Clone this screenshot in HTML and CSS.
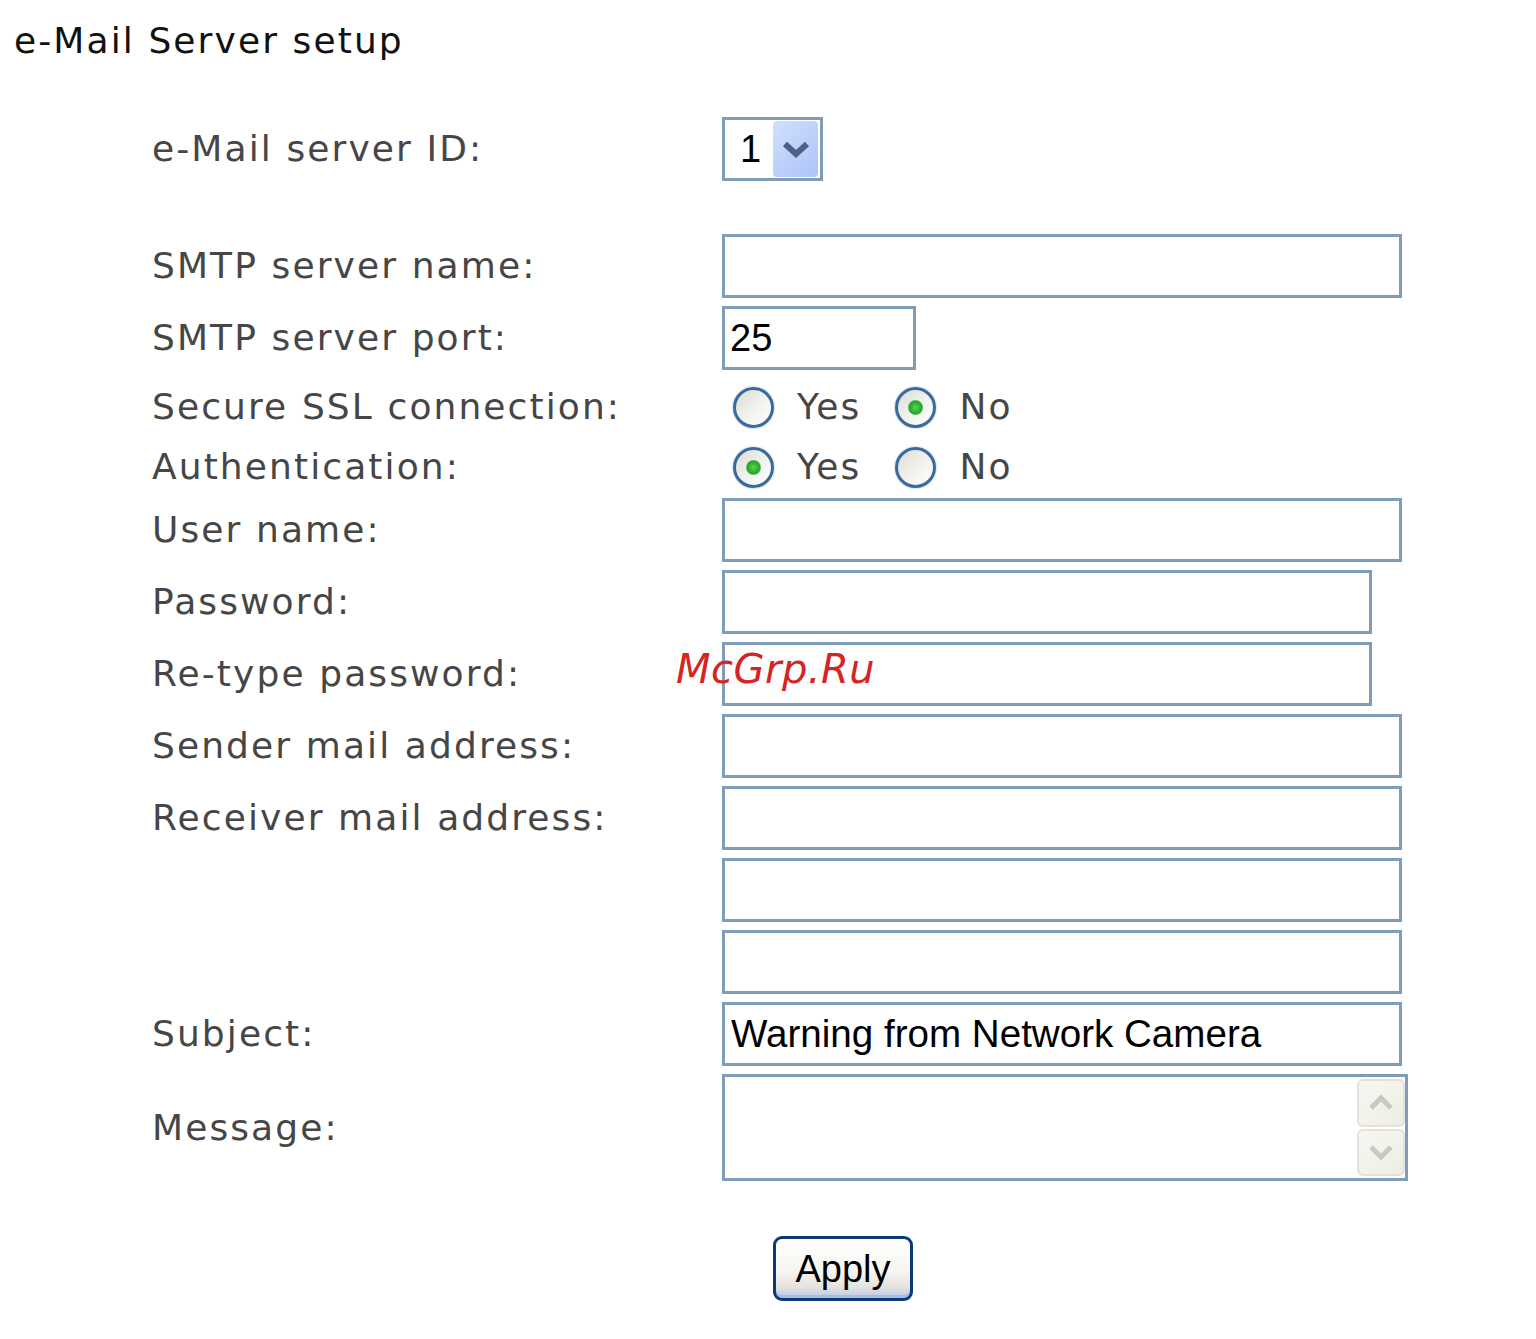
FILE: index.html
```html
<!DOCTYPE html>
<html lang="en">
<head>
<meta charset="utf-8">
<title>e-Mail Server setup</title>
<link rel="stylesheet" href="styles.css">
</head>
<body>
<h1 class="title">e-Mail Server setup</h1>
<form class="form">
  <div class="row row-id">
    <label class="lbl">e-Mail server ID:</label>
    <div class="select">
      <span class="select-val">1</span>
      <span class="select-btn">
        <svg width="30" height="20" viewBox="0 0 30 20"><polyline points="4,5 15,15 26,5" fill="none" stroke="#4d6185" stroke-width="6" stroke-linejoin="miter"/></svg>
      </span>
    </div>
  </div>
  <div class="row row-name">
    <label class="lbl">SMTP server name:</label>
    <input class="field wide" type="text">
  </div>
  <div class="row">
    <label class="lbl">SMTP server port:</label>
    <input class="field port" type="text" value="25">
  </div>
  <div class="row row-radio row-ssl">
    <label class="lbl">Secure SSL connection:</label>
    <div class="radios">
      <input class="radio" type="radio" name="ssl"><span class="rtext">Yes</span>
      <input class="radio" type="radio" name="ssl" checked><span class="rtext">No</span>
    </div>
  </div>
  <div class="row row-radio row-auth">
    <label class="lbl">Authentication:</label>
    <div class="radios">
      <input class="radio" type="radio" name="auth" checked><span class="rtext">Yes</span>
      <input class="radio" type="radio" name="auth"><span class="rtext">No</span>
    </div>
  </div>
  <div class="row row-user">
    <label class="lbl">User name:</label>
    <input class="field wide" type="text">
  </div>
  <div class="row">
    <label class="lbl">Password:</label>
    <input class="field pass" type="password">
  </div>
  <div class="row">
    <label class="lbl">Re-type password:</label>
    <input class="field pass" type="password">
  </div>
  <div class="row">
    <label class="lbl">Sender mail address:</label>
    <input class="field wide" type="text">
  </div>
  <div class="row">
    <label class="lbl">Receiver mail address:</label>
    <input class="field wide" type="text">
  </div>
  <div class="row">
    <span class="lbl"></span>
    <input class="field wide" type="text">
  </div>
  <div class="row">
    <span class="lbl"></span>
    <input class="field wide" type="text">
  </div>
  <div class="row">
    <label class="lbl">Subject:</label>
    <input class="field wide subject" type="text" value="Warning from Network Camera">
  </div>
  <div class="row row-msg">
    <label class="lbl">Message:</label>
    <div class="textarea">
      <textarea class="ta"></textarea>
      <div class="sbar">
        <span class="sbtn"><svg width="30" height="20" viewBox="0 0 30 20"><polyline points="5,15 15,5 25,15" fill="none" stroke="#cac9c1" stroke-width="5"/></svg></span>
        <span class="sbtn"><svg width="30" height="20" viewBox="0 0 30 20"><polyline points="5,5 15,15 25,5" fill="none" stroke="#cac9c1" stroke-width="5"/></svg></span>
      </div>
    </div>
  </div>
  <div class="row row-apply">
    <span class="lbl"></span>
    <div class="apply-wrap"><button class="apply" type="button">Apply</button></div>
  </div>
</form>
<div class="watermark">McGrp.Ru</div>
</body>
</html>
```
FILE: styles.css
```css
html, body {
  margin: 0;
  padding: 0;
  background: #ffffff;
}
body {
  position: relative;
  padding: 21px 0 40px 14px;
  font-family: "DejaVu Sans", Verdana, sans-serif;
}
.title {
  margin: 0;
  font-size: 36px;
  font-weight: normal;
  letter-spacing: 2.1px;
  line-height: 40px;
  color: #111;
}
.form {
  margin: 0 0 0 138px;
  display: flex;
  flex-direction: column;
}
.row {
  display: grid;
  grid-template-columns: 570px auto;
  align-items: center;
  justify-items: start;
  margin-top: 8px;
}
.row-id { margin-top: 56px; }
.row-name { margin-top: 53px; }
.row-ssl { margin-top: 7px; }
.row-auth { margin-top: 0; }
.row-user { margin-top: 1px; }
.row-radio { height: 60px; }
.row-apply { margin-top: 55px; }

.lbl {
  font-family: "DejaVu Sans", Verdana, sans-serif;
  font-size: 36px;
  letter-spacing: 2.1px;
  line-height: 40px;
  color: #464646;
  white-space: nowrap;
}

.field {
  box-sizing: border-box;
  height: 64px;
  margin: 0;
  border: 3px solid #7f9db9;
  background: #fff;
  padding: 0 6px;
  font-family: "Liberation Sans", Arial, sans-serif;
  font-size: 38px;
  color: #000;
  outline: none;
}
.wide { width: 680px; }
.pass { width: 650px; }
.port { width: 194px; padding-left: 5px; }
.subject { padding-left: 6px; font-size: 38.6px; }

.select {
  box-sizing: border-box;
  width: 101px;
  height: 64px;
  border: 3px solid #7f9db9;
  background: #fff;
  display: flex;
  align-items: center;
  padding: 0 2px 0 15px;
}
.select-val {
  flex: 1;
  font-family: "Liberation Sans", Arial, sans-serif;
  font-size: 38px;
  color: #000;
}
.select-btn {
  width: 45px;
  height: 56px;
  border-radius: 4px;
  background: linear-gradient(135deg, #d3e0fd 0%, #bcd0fb 55%, #b0c5f6 100%);
  display: flex;
  align-items: center;
  justify-content: center;
}

.radios {
  display: flex;
  align-items: center;
  padding-left: 11px;
}
.radio {
  appearance: none;
  -webkit-appearance: none;
  box-sizing: border-box;
  width: 41px;
  height: 41px;
  margin: 0;
  border-radius: 50%;
  border: 3px solid #3a6a9c;
  box-shadow: 0 0 2px #7fa2c8;
  background: linear-gradient(135deg, #dcdcd6 0%, #f2f2ef 55%, #ffffff 100%);
}
.radio:checked {
  background:
    radial-gradient(circle, #4fd84f 0, #2cab2c 5.5px, #25a325 6.5px, rgba(255,255,255,0) 8px),
    linear-gradient(135deg, #dcdcd6 0%, #f2f2ef 55%, #ffffff 100%);
}
.rtext {
  font-family: "DejaVu Sans", Verdana, sans-serif;
  font-size: 36px;
  letter-spacing: 2.1px;
  line-height: 40px;
  color: #464646;
  margin: 0 34px 0 23px;
}

.textarea {
  box-sizing: border-box;
  width: 686px;
  height: 107px;
  border: 3px solid #7f9db9;
  background: #fff;
  display: flex;
}
.ta {
  flex: 1;
  border: 0;
  margin: 0;
  padding: 4px;
  resize: none;
  outline: none;
  overflow: hidden;
  font-family: "Liberation Sans", Arial, sans-serif;
  font-size: 38px;
}
.sbar {
  width: 48px;
  display: flex;
  flex-direction: column;
  gap: 2px;
  padding: 2px 0;
}
.sbtn {
  box-sizing: border-box;
  flex: 1;
  border: 2px solid #e4e2d8;
  border-radius: 6px;
  background: linear-gradient(135deg, #f7f6f1 0%, #eeede5 100%);
  display: flex;
  align-items: center;
  justify-content: center;
}

.apply-wrap { padding-left: 51px; }
.apply {
  box-sizing: border-box;
  width: 140px;
  height: 65px;
  border: 3px solid #0a3a78;
  border-radius: 9px;
  background: linear-gradient(180deg, #ffffff 0%, #f6f5f0 55%, #e4e2dc 82%, #b6c7ef 100%);
  box-shadow: inset 0 -3px 0 #a9bdec, inset 0 3px 0 #ffffff;
  font-family: "Liberation Sans", Arial, sans-serif;
  font-size: 38px;
  color: #000;
  padding: 0;
  line-height: 1;
}

.watermark {
  position: absolute;
  left: 676px;
  top: 646px;
  font-family: "DejaVu Sans", sans-serif;
  font-style: italic;
  font-size: 40px;
  color: #d42424;
  letter-spacing: 0.5px;
}
```
